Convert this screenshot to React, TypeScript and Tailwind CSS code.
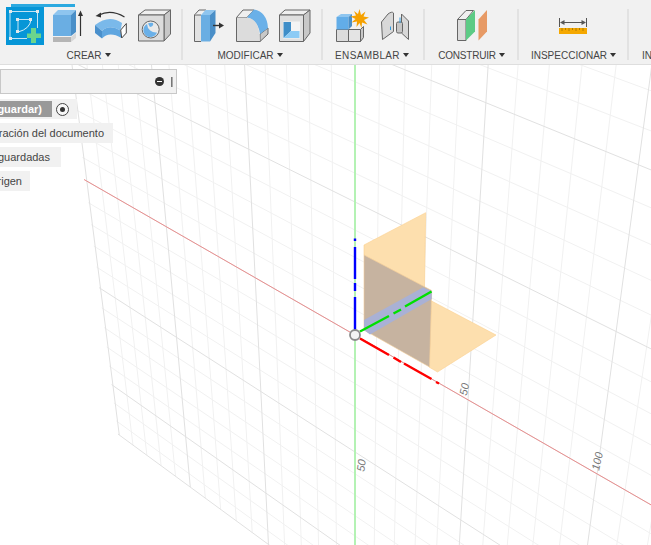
import { ReactNode } from "react";

// plane (u, v) in units of 50mm -> screen, fitted from the axis ticks
const project = (u: number, v: number): [number, number] => {
  const w = 1 - 0.062 * u + 0.064 * v;
  return [(84 * u + 22.72 * v + 355) / w, (40.07 * u + 145.94 * v + 335) / w];
};

const U_MIN = -3.02;
const U_MAX = 7;
const V_MIN = -5;
const V_MAX = 2.55;

function gridLines() {
  const lines: { a: [number, number]; b: [number, number]; major: boolean }[] = [];
  for (let i = -15; i <= 35; i++) {
    lines.push({ a: project(i / 5, V_MIN), b: project(i / 5, V_MAX), major: i % 5 === 0 });
  }
  for (let i = -25; i <= 12; i++) {
    lines.push({ a: project(U_MIN, i / 5), b: project(U_MAX, i / 5), major: i % 5 === 0 });
  }
  lines.push({ a: project(U_MIN, V_MAX), b: project(U_MAX, V_MAX), major: true });
  return lines;
}

function Icon({ x, children }: { x: number; children: ReactNode }) {
  return (
    <svg width={44} height={44} viewBox={`${x} 4 44 44`} className="shrink-0">
      <g strokeLinejoin="round">{children}</g>
    </svg>
  );
}

function Group({
  width,
  label,
  labelClass,
  children,
}: {
  width: number;
  label: string;
  labelClass: string;
  children?: ReactNode;
}) {
  return (
    <div className="flex flex-col items-center shrink-0" style={{ width }}>
      <div className="flex h-[44px] mt-[4px]">{children}</div>
      <div className={`flex items-center gap-[3px] mt-[2px] text-[10px] leading-[12px] text-[#454545] whitespace-nowrap ${labelClass}`}>
        {label}
        <svg width={6} height={4} viewBox="0 0 6 4" className="-mt-[2px]">
          <path d="M0 0H6L3 4Z" fill="#333" />
        </svg>
      </div>
    </div>
  );
}

function Divider() {
  return <div className="w-[2px] h-[51px] mt-[9px] bg-[#e2e2e2] shrink-0" />;
}

const EDGE = "#666";

function Toolbar() {
  return (
    <div className="relative flex h-[65px] shrink-0 bg-[#f1f1f1] border-b border-[#dedede]">
      <div className="absolute left-[11px] top-[4px] w-[64px] h-[3px] bg-[#2ba9e0]" />
      <Group width={181} label="CREAR" labelClass="-ml-[4px]">
        <Icon x={4}>
          <rect x={7} y={7} width={38} height={38} fill="#0696d7" />
          <path d="M11 11.500H38.500V28M11 11.500V38.500H28M19 19.500H32M19 19.500V32" stroke="#c4e4f4" fill="none" />
          <path d="M32 19.500Q31 29 19 32" stroke="#d6eef8" fill="none" />
          <path d="M10 10h3v3h-3zM37 10h3v3h-3zM10 37h3v3h-3zM17 18h3v3h-3zM30 18h3v3h-3zM17 30h3v3h-3z" fill="#e3e8ea" />
          <path d="M32 28h5v5.500h5v4.500h-5v5h-5v-5h-4v-4.500h4z" fill="#6bd58c" />
        </Icon>
        <Icon x={48}>
          <path d="M54 37H72V42H54Z" fill="#b5b5b5" />
          <path d="M72 37L77 33V38L72 42Z" fill="#d8d8d8" />
          <path d="M54 15H72V36H54Z" fill="#6aaee3" />
          <path d="M54 15L59 10H77L72 15Z" fill="#8ec5ef" />
          <path d="M72 15L77 10V32L72 36Z" fill="#4a8fc8" />
          <path d="M81.500 36V14" stroke="#333" strokeWidth={1.2} />
          <path d="M81.500 10.500L79 16H84Z" fill="#333" />
        </Icon>
        <Icon x={92}>
          <path d="M100 15Q112 9 125.500 17" stroke="#333" fill="none" strokeWidth={1.2} />
          <path d="M96.500 16L102 12.500L102 17.500Z" fill="#333" />
          <path d="M96 25Q110 14 123 23L121.500 30.500Q110 24 103 31Z" fill="#7ab9ea" />
          <path d="M96 25L103 31V38.500L96 33Z" fill="#4a90cc" />
          <path d="M103 31Q110 24 121.500 30.500L122.500 38Q110 31 103 38.500Z" fill="#5fa6e0" />
          <path d="M121.700 30L127.300 23.500V33L122.700 38Z" fill="#fff" stroke="#444" />
        </Icon>
        <Icon x={136}>
          <path d="M139.500 15L146 10H171.500L165 15Z" fill="#efefef" stroke={EDGE} />
          <path d="M165 15L171.500 10V34L165 41Z" fill="#c8c8c8" stroke={EDGE} />
          <path d="M139.500 15H165V41H139.500Z" fill="#dcdcdc" stroke={EDGE} />
          <circle cx={151.700} cy={29.500} r={8.500} fill="#e9e9e9" stroke={EDGE} />
          <path d="M148 24A7 7 0 1 0 158 32.500A9 9 0 0 1 148 24Z" fill="#6ab0e8" />
          <path d="M149 23.500A7 7 0 0 1 154 23Q155 26 151 27Z" fill="#6ab0e8" />
        </Icon>
      </Group>
      <Divider />
      <Group width={138} label="MODIFICAR" labelClass="-ml-[4px]">
        <Icon x={186}>
          <path d="M201 15H194.500V41.500H201" fill="#e2e2e2" stroke={EDGE} />
          <path d="M194.500 15L199 10H206" fill="#f0f0f0" stroke={EDGE} />
          <path d="M201 15H210V41.500H201Z" fill="#6aaee3" />
          <path d="M201 15L205.500 10H215.500L210 15Z" fill="#8ec5ef" />
          <path d="M210 15L215.500 10V33L210 41.500Z" fill="#4a8fc8" />
          <path d="M213 25.500H220" stroke="#333" strokeWidth={1.4} />
          <path d="M224 25.500L219 22.500V28.500Z" fill="#333" />
        </Icon>
        <Icon x={230}>
          <path d="M236.500 17.500L243 10H254L247 17.500Z" fill="#efefef" stroke={EDGE} />
          <path d="M260 34L268 28V34L260 41.500Z" fill="#c8c8c8" stroke={EDGE} />
          <path d="M247 17.500L254 9.500Q267 12 268 28L260 34Q258 20 247 17.500Z" fill="#6ab0e8" />
          <path d="M236.500 17.500H246Q260 18 260 41.500H236.500Z" fill="#dcdcdc" />
          <path d="M236.500 17.500V41.500H260" fill="none" stroke={EDGE} />
        </Icon>
        <Icon x={274}>
          <path d="M279.500 15L285 10H310L303.500 15Z" fill="#efefef" stroke={EDGE} />
          <path d="M303.500 15L310 10V33L303.500 41.500Z" fill="#c8c8c8" stroke={EDGE} />
          <path d="M279.500 15H303.500V41.500H279.500Z" fill="#e0e0e0" stroke={EDGE} />
          <rect x={283} y={21.500} width={17} height={17} fill="#f4f4f4" />
          <path d="M283.500 22H291V31L283.500 38Z" fill="#3f8ec8" />
          <path d="M291 31H299.500V38H283.500Z" fill="#8ccbf5" />
        </Icon>
      </Group>
      <Divider />
      <Group width={100} label="ENSAMBLAR" labelClass="-ml-[2px] tracking-[0.35px]">
        <Icon x={329}>
          <path d="M348.500 29.500H360.500V41.500H348.500Z" fill="#e4e4e4" stroke={EDGE} />
          <path d="M360.500 29.500L363.500 26.500V37.500L360.500 41.500Z" fill="#c8c8c8" stroke={EDGE} />
          <path d="M336.500 29.500H348.500V41.500H336.500Z" fill="#dcdcdc" stroke={EDGE} />
          <path d="M336.500 17H348.500V29.500H336.500Z" fill="#62ade8" />
          <path d="M336.500 17L341 14H352L348.500 17Z" fill="#8ec5ef" />
          <path d="M348.500 17L352 14V26L348.500 29.500Z" fill="#4a8fc8" />
          <path
            d="M359.500 9L361 15L365.500 11.500L363.500 16.500L369 17.500L364 20L367.500 24.500L362 22.500L361.500 28L359.500 23L356.500 27L357 21.500L351.500 22.500L355.500 19L350.500 16.500L356 15.500L354 11L358 14Z"
            fill="#f5a100"
          />
        </Icon>
        <Icon x={373}>
          <path d="M381.500 22L388 14Q392 11 393.500 13V31.500L382.500 39.500Z" fill="#d8d8d8" stroke={EDGE} />
          <path d="M401.500 14L408.500 21V39.500L401.500 33Z" fill="#d8d8d8" stroke={EDGE} />
          <rect x={396.500} y={22} width={6} height={11} rx={1.500} fill="#c6c6c6" stroke={EDGE} />
          <path d="M390.500 26.500V30M400 17.500V23" stroke="#2f9be0" />
        </Icon>
      </Group>
      <Divider />
      <Group width={92} label="CONSTRUIR" labelClass="ml-[1px] tracking-[-0.2px]">
        <Icon x={449}>
          <path d="M466 19.500L473.500 10.500H466L457.500 19.500Z" fill="#f0f0f0" stroke={EDGE} />
          <path d="M457.500 19.500H466V40.500H457.500Z" fill="#dcdcdc" stroke={EDGE} />
          <path d="M466 19.500L475 10V31.500L466 40.500Z" fill="#5ccb85" />
          <path d="M478.500 19.500L487 10V31.500L478.500 40.500Z" fill="#e79a65" />
        </Icon>
      </Group>
      <Divider />
      <Group width={108} label="INSPECCIONAR" labelClass="ml-[1px]">
        <Icon x={551}>
          <path d="M559.500 18V27M586.500 18V27M561 22.500H585" stroke="#555" fill="none" />
          <path d="M560 22.500L564.500 20V25ZM586 22.500L581.500 20V25Z" fill="#555" />
          <rect x={559} y={28} width={28} height={6} fill="#f5a800" />
          <path d="M562 28V31M565.500 28V30M569 28V31M572.500 28V30M576 28V31M579.500 28V30M583 28V31" stroke="#b07d00" />
        </Icon>
      </Group>
      <Divider />
      <div className="flex flex-col shrink-0 pl-[13px]">
        <div className="h-[44px] mt-[4px]" />
        <div className="mt-[2px] text-[10px] leading-[12px] text-[#454545] whitespace-nowrap">INSERTAR</div>
      </div>
    </div>
  );
}

function Viewport() {
  const lines = gridLines();
  return (
    <svg viewBox="0 65 651 480" className="block w-full h-full">
      {lines.filter((l) => !l.major).map((l, i) => (
        <line key={i} x1={l.a[0]} y1={l.a[1]} x2={l.b[0]} y2={l.b[1]} stroke="#f1f1f1" />
      ))}
      {lines.filter((l) => l.major).map((l, i) => (
        <line key={i} x1={l.a[0]} y1={l.a[1]} x2={l.b[0]} y2={l.b[1]} stroke="#e1e1e1" />
      ))}
      <line x1={84} y1={179.500} x2={660} y2={510} stroke="#e98f8f" />
      <line x1={355} y1={65} x2={355} y2={545} stroke="#b4f2b4" strokeWidth={2} />

      {/* sheet planes */}
      <path d="M364 245L425.700 212.700L424.500 287L364 255Z" fill="#fddfae" stroke="#fbd08f" strokeWidth={0.6} />
      <path d="M431.500 301L496 335L437.500 372L429 367Z" fill="#fddfae" stroke="#fbd08f" strokeWidth={0.6} />
      <path d="M364 255L431.700 290.500L429.500 367L364 330Z" fill="#c6b3a0" stroke="#f3cf9a" strokeWidth={0.6} />
      <path d="M364 320L423 287.500L431.700 291L431.700 299L370 334.500L364 330Z" fill="#a9b1d5" />

      {/* sketch axes */}
      <path d="M355 333V297M355 291V283M355 279V247M355 241V238.500" stroke="#0000ff" strokeWidth={2.400} fill="none" />
      <path d="M360 331.500L389 316M393.500 313.500L401 309.500M405 306.500L431.500 291.500" stroke="#00e000" strokeWidth={2.400} fill="none" />
      <path d="M360 338.500L389 355M393.500 357.500L401 362M404 363.500L431.500 379M436 382L439 383.500" stroke="#ff0000" strokeWidth={2.400} fill="none" />
      <circle cx={355} cy={335} r={5} fill="#f4f4f4" stroke="#8c8c8c" strokeWidth={1.800} />

      <g fontSize={11} fontStyle="italic" fill="#777" textAnchor="middle">
        <text transform="translate(468 390) rotate(-78)">50</text>
        <text transform="translate(601 462) rotate(-78)">100</text>
        <text transform="translate(365 466) rotate(-82)">50</text>
      </g>
    </svg>
  );
}

function BrowserRow({ width, label, rowClass }: { width: number; label: string; rowClass: string }) {
  return (
    <div className={`flex justify-end items-center h-[20px] bg-[#f1f1f1] text-[11px] text-[#454545] whitespace-nowrap ${rowClass}`} style={{ width }}>
      {label}
    </div>
  );
}

function Browser() {
  return (
    <div className="absolute left-0 top-[4px] flex flex-col items-start">
      <div className="flex items-center justify-end gap-[7px] w-[177px] h-[25px] pr-[3px] bg-[#f1f1f1] border border-[#c8c8c8]">
        <div className="flex items-center justify-center w-[9px] h-[9px] rounded-full bg-[#333]">
          <div className="w-[5px] h-[1px] bg-white" />
        </div>
        <div className="w-[2px] h-[10px] border-l border-r border-l-[#777] border-r-[#aaa]" />
      </div>
      <div className="flex items-center gap-[4px] w-[77px] h-[20px] mt-[5px] justify-end pr-[8px] bg-[#f1f1f1]">
        <div className="flex justify-end items-center shrink-0 h-[16px] w-[52px] pr-[10px] pt-[1px] bg-[#999] text-[11px] font-bold text-white whitespace-nowrap">
          (Sin guardar)
        </div>
        <div className="flex items-center justify-center shrink-0 w-[13px] h-[13px] rounded-full border border-[#444] bg-[#f8f8f8]">
          <div className="w-[5px] h-[5px] rounded-full bg-[#333]" />
        </div>
      </div>
      <div className="flex flex-col gap-[4px] mt-[4px]">
        <BrowserRow width={113} label="Configuración del documento" rowClass="pr-[9px]" />
        <BrowserRow width={61} label="Vistas guardadas" rowClass="pr-[11px]" />
        <BrowserRow width={30} label="Origen" rowClass="pr-[8px]" />
      </div>
    </div>
  );
}

export default function App() {
  return (
    <div className="flex flex-col w-[651px] h-[545px] overflow-hidden bg-white font-['Liberation_Sans',Arial,sans-serif]">
      <Toolbar />
      <div className="relative flex-1 min-h-0">
        <Viewport />
        <Browser />
      </div>
    </div>
  );
}
